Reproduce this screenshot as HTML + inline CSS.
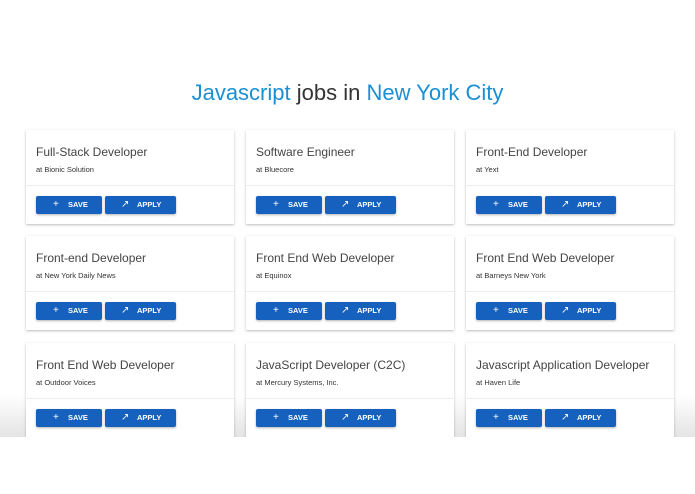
<!DOCTYPE html>
<html><head><style>
body{margin:0;width:695px;height:494px;background:#fff;font-family:"Liberation Sans",Arial,sans-serif;overflow:hidden;position:relative}
.wrap{position:absolute;left:0;top:0;width:695px;height:437px;overflow:hidden}
h1{position:absolute;top:80px;left:0;width:695px;text-align:center;margin:0;font-weight:normal;font-size:22px;color:#333}
h1 span{color:#1b8fd4}
.card{position:absolute;z-index:2;width:208px;height:94px;background:#fff;box-shadow:0 1px 3px rgba(0,0,0,.2),0 1px 1px rgba(0,0,0,.08)}
.t{position:absolute;left:10px;top:15px;font-size:12px;color:#444}
.c{position:absolute;left:10px;top:35px;font-size:7.5px;color:#333}
.d{position:absolute;left:0;right:0;top:55px;border-top:1px solid #eee}
.b{position:absolute;top:66px;height:18px;background:#1660be;color:#fff;font-size:7.5px;font-weight:bold;line-height:18px;border-radius:2px;box-shadow:0 1px 2px rgba(0,0,0,.3)}
.s{left:10px;width:66px}.a{left:79px;width:71px}
.b i{font-style:normal;position:absolute;font-weight:normal;font-size:10px}
.s i{left:17px}.s em{position:absolute;left:32px;font-style:normal}
.a i{left:16px}.a em{position:absolute;left:32px;font-style:normal}
.fade{position:absolute;z-index:1;left:0;top:395px;width:695px;height:42px;background:linear-gradient(rgba(240,240,240,0),rgba(228,228,228,1))}
</style></head><body><div class="wrap">
<h1><span>Javascript</span> jobs in <span>New York City</span></h1>
<div class="card" style="left:26px;top:130px"><div class="t">Full-Stack Developer</div><div class="c">at Bionic Solution</div><div class="d"></div><div class="b s"><i>+</i><em>SAVE</em></div><div class="b a"><i>↗</i><em>APPLY</em></div></div>
<div class="card" style="left:246px;top:130px"><div class="t">Software Engineer</div><div class="c">at Bluecore</div><div class="d"></div><div class="b s"><i>+</i><em>SAVE</em></div><div class="b a"><i>↗</i><em>APPLY</em></div></div>
<div class="card" style="left:466px;top:130px"><div class="t">Front-End Developer</div><div class="c">at Yext</div><div class="d"></div><div class="b s"><i>+</i><em>SAVE</em></div><div class="b a"><i>↗</i><em>APPLY</em></div></div>
<div class="card" style="left:26px;top:236px"><div class="t">Front-end Developer</div><div class="c">at New York Daily News</div><div class="d"></div><div class="b s"><i>+</i><em>SAVE</em></div><div class="b a"><i>↗</i><em>APPLY</em></div></div>
<div class="card" style="left:246px;top:236px"><div class="t">Front End Web Developer</div><div class="c">at Equinox</div><div class="d"></div><div class="b s"><i>+</i><em>SAVE</em></div><div class="b a"><i>↗</i><em>APPLY</em></div></div>
<div class="card" style="left:466px;top:236px"><div class="t">Front End Web Developer</div><div class="c">at Barneys New York</div><div class="d"></div><div class="b s"><i>+</i><em>SAVE</em></div><div class="b a"><i>↗</i><em>APPLY</em></div></div>
<div class="card" style="left:26px;top:343px"><div class="t">Front End Web Developer</div><div class="c">at Outdoor Voices</div><div class="d"></div><div class="b s"><i>+</i><em>SAVE</em></div><div class="b a"><i>↗</i><em>APPLY</em></div></div>
<div class="card" style="left:246px;top:343px"><div class="t">JavaScript Developer (C2C)</div><div class="c">at Mercury Systems, Inc.</div><div class="d"></div><div class="b s"><i>+</i><em>SAVE</em></div><div class="b a"><i>↗</i><em>APPLY</em></div></div>
<div class="card" style="left:466px;top:343px"><div class="t">Javascript Application Developer</div><div class="c">at Haven Life</div><div class="d"></div><div class="b s"><i>+</i><em>SAVE</em></div><div class="b a"><i>↗</i><em>APPLY</em></div></div>
<div class="fade"></div>
</div></body></html>
